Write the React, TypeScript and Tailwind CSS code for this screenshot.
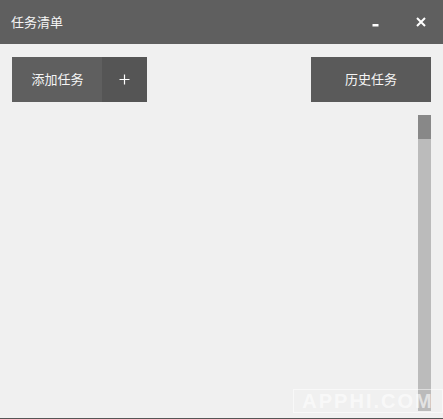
import React from 'react';

const App = () => {
  return (
    <div className="relative flex h-[419px] w-[443px] flex-col overflow-hidden bg-[#f0f0f0] font-['Liberation_Sans','Noto_Sans_CJK_SC',sans-serif] text-[#f5f5f5]">
      {/* Title bar */}
      <div className="flex h-[44px] shrink-0 items-center bg-[#5f5f5f] pl-[11px]">
        <span className="text-[13px] leading-none">任务清单</span>
        <div className="ml-auto flex items-center">
          <svg width="8" height="8" viewBox="0 0 8 8" className="mr-[36px] mt-[6px]">
            <rect x="0.5" y="3" width="6" height="2.5" fill="#ffffff" />
          </svg>
          <svg width="10" height="10" viewBox="0 0 10 10" className="mr-[17px] mt-[-1px]">
            <path d="M1 1 L9 9 M9 1 L1 9" stroke="#ffffff" strokeWidth="2" />
          </svg>
        </div>
      </div>

      {/* Actions */}
      <div className="mt-[13px] flex justify-between pl-[12px] pr-[12px]">
        <button className="flex h-[45px] w-[135px] text-[13px]">
          <span className="flex h-full w-[90px] items-center justify-center bg-[#5f5f5f] pl-[1px]">添加任务</span>
          <span className="flex h-full w-[45px] items-center justify-center bg-[#555555]">
            <svg width="11" height="11" viewBox="0 0 11 11">
              <path d="M5.5 0.5 V10.5 M0.5 5.5 H10.5" stroke="#ffffff" strokeWidth="1.2" />
            </svg>
          </span>
        </button>
        <button className="flex h-[45px] w-[120px] items-center justify-center bg-[#5a5a5a] text-[13px]">历史任务</button>
      </div>

      {/* List area with scrollbar */}
      <div className="mt-[13px] flex min-h-0 flex-1 justify-end pb-[7px] pr-[12px]">
        <div className="h-full w-[13px] bg-[#bbbbbb]">
          <div className="h-[24px] w-full bg-[#888888]" />
        </div>
      </div>

      {/* Bottom edge */}
      <div className="h-px shrink-0 bg-[#555555]" />

      {/* Watermark */}
      <div className="absolute bottom-[6px] right-0 flex h-[24px] w-[150px] items-center justify-center border border-white/50 text-[20px] font-bold leading-none tracking-[2px] text-white/60">
        APPHI.COM
      </div>
    </div>
  );
};

export default App;
